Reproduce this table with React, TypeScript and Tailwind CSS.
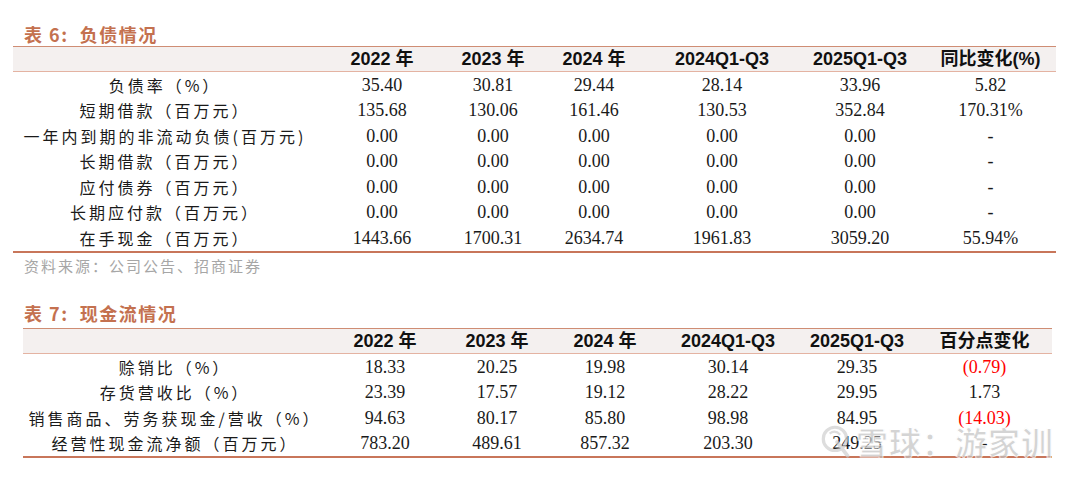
const debtHead = ["2022 年", "2023 年", "2024 年", "2024Q1-Q3", "2025Q1-Q3", "同比变化(%)"];

const debtRows = [
  { label: "负债率（%）", vals: ["35.40", "30.81", "29.44", "28.14", "33.96", "5.82"] },
  { label: "短期借款（百万元）", vals: ["135.68", "130.06", "161.46", "130.53", "352.84", "170.31%"] },
  { label: "一年内到期的非流动负债(百万元)", vals: ["0.00", "0.00", "0.00", "0.00", "0.00", "-"] },
  { label: "长期借款（百万元）", vals: ["0.00", "0.00", "0.00", "0.00", "0.00", "-"] },
  { label: "应付债券（百万元）", vals: ["0.00", "0.00", "0.00", "0.00", "0.00", "-"] },
  { label: "长期应付款（百万元）", vals: ["0.00", "0.00", "0.00", "0.00", "0.00", "-"] },
  { label: "在手现金（百万元）", vals: ["1443.66", "1700.31", "2634.74", "1961.83", "3059.20", "55.94%"] },
];

const cashHead = ["2022 年", "2023 年", "2024 年", "2024Q1-Q3", "2025Q1-Q3", "百分点变化"];

const cashRows = [
  { label: "赊销比（%）", vals: ["18.33", "20.25", "19.98", "30.14", "29.35", "(0.79)"], red: true },
  { label: "存货营收比（%）", vals: ["23.39", "17.57", "19.12", "28.22", "29.95", "1.73"] },
  { label: "销售商品、劳务获现金/营收（%）", vals: ["94.63", "80.17", "85.80", "98.98", "84.95", "(14.03)"], red: true },
  { label: "经营性现金流净额（百万元）", vals: ["783.20", "489.61", "857.32", "203.30", "249.25", "-"] },
];

const cjk = "font-['Noto_Sans_CJK_SC',sans-serif]";
const num = "font-['Liberation_Serif','Noto_Sans_CJK_SC',serif]";
const head = "font-['Liberation_Sans','Noto_Sans_CJK_SC',sans-serif]";

type Row = { label: string; vals: string[]; red?: boolean };

const DataTable = ({ cols, headers, rows }: { cols: string; headers: string[]; rows: Row[] }) => (
  <div className="border-t border-[#cf8d74] border-b-2 border-b-[#c8765a]">
    <div className={`grid ${cols} h-[25px] items-center bg-[#f4f0ef] border-b border-[#e4b3a2]`}>
      <div />
      {headers.map((h, i) => (
        <div key={i} className={`text-center text-[18px] leading-[22px] font-bold text-[#111] ${head}`}>
          {h}
        </div>
      ))}
    </div>
    {rows.map((r, ri) => (
      <div key={ri} className={`grid ${cols} h-[25.5px] items-center`}>
        <div className={`text-center text-[16px] leading-[20px] tracking-[3px] text-[#1a1a1a] ${cjk}`}>
          {r.label}
        </div>
        {r.vals.map((v, i) => (
          <div
            key={i}
            className={`text-center text-[18px] leading-[20px] ${num} ${
              r.red && i === 5 ? "text-[#ff0000]" : "text-[#1a1a1a]"
            }`}
          >
            {v}
          </div>
        ))}
      </div>
    ))}
  </div>
);

const Watermark = () => (
  <div className="absolute left-[820px] top-[421px] flex items-center gap-1 opacity-70">
    <svg width="32" height="36" viewBox="0 0 30 34">
      <circle cx="14" cy="15" r="11" fill="none" stroke="#cfcfcf" strokeWidth="3" />
      <path d="M16 18 L26 31" stroke="#cfcfcf" strokeWidth="3.5" strokeLinecap="round" />
      <path d="M9 10 Q14 6 19 11" fill="none" stroke="#cfcfcf" strokeWidth="2" />
    </svg>
    <span
      className={`text-[32px] leading-[40px] font-bold text-[#c2c2c2] tracking-[1px] ${cjk}`}
      style={{ WebkitTextStroke: "1px #ffffff" }}
    >
      雪球：游家训
    </span>
  </div>
);

export default function App() {
  return (
    <div className="relative w-[1080px] h-[479px] bg-white overflow-hidden">
      <div className="pt-[23px]">
        <div className={`pl-[24px] h-[22px] text-[18px] font-bold tracking-[1.5px] text-[#c4714f] leading-[22px] ${cjk}`}>
          表 6:&nbsp;&nbsp;负债情况
        </div>
        <div className="ml-[13px] mt-[1px] w-[1043px]">
          <DataTable
            cols="grid-cols-[304px_130px_92px_110px_146px_130px_131px]"
            headers={debtHead}
            rows={debtRows}
          />
        </div>
        <div className={`pl-[24px] mt-[2px] text-[15px] tracking-[2px] text-[#a6a6a6] ${cjk}`}>
          资料来源：公司公告、招商证券
        </div>
        <div className={`pl-[24px] mt-[25px] h-[22px] text-[18px] font-bold tracking-[1.5px] text-[#c4714f] leading-[22px] ${cjk}`}>
          表 7:&nbsp;&nbsp;现金流情况
        </div>
        <div className="ml-[23px] mt-[4px] w-[1029px]">
          <DataTable
            cols="grid-cols-[304px_116px_108px_108px_138px_120px_135px]"
            headers={cashHead}
            rows={cashRows}
          />
        </div>
      </div>
      <Watermark />
    </div>
  );
}
